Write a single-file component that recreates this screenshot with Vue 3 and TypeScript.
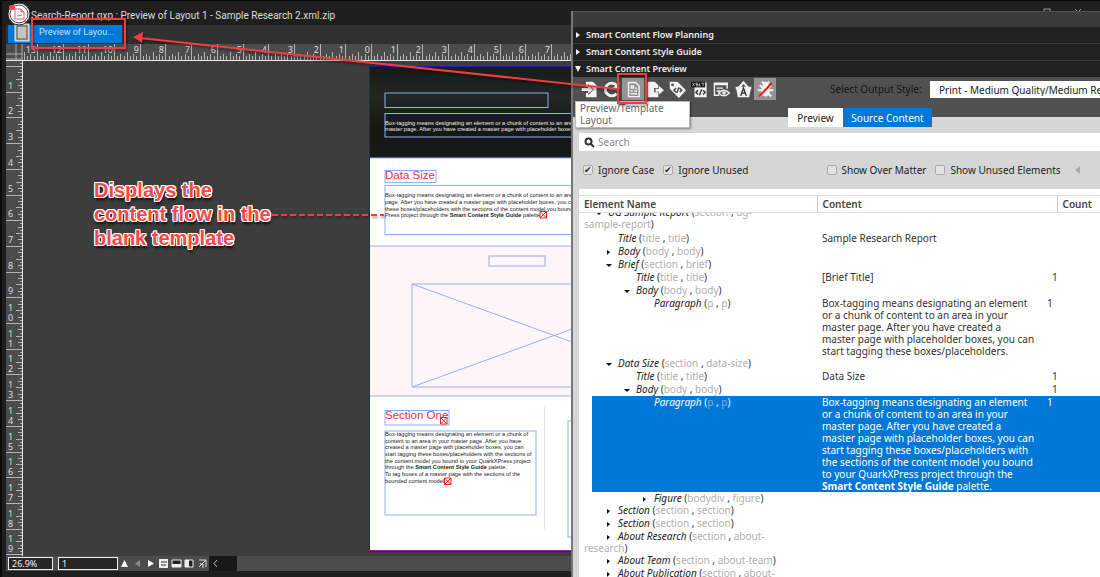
<script setup lang="ts">
import { ref } from 'vue'

interface TreeRow {
  level: number
  name: string
  tags: [string, string]
  tail?: string
  toggle?: 'open' | 'closed'
  content?: string
  strong?: string
  end?: string
  count?: string
  selected?: boolean
  size?: string
}

const PITCH = 25.7
const search = ref('')
const ignoreCase = ref(true)
const ignoreUnused = ref(true)
const overMatter = ref(false)
const unusedElements = ref(false)

// Horizontal ruler: zero sits at the left edge of the page.
const hOrigin = 365
const hTicks: { x: number; h: number }[] = []
for (let i = -14 * 8; i <= 8 * 8; i++) {
  const x = Math.round(hOrigin + (i * PITCH) / 8)
  if (x < 18) continue
  hTicks.push({ x, h: i % 8 === 0 ? 16 : i % 4 === 0 ? 8 : i % 2 === 0 ? 6 : 4 })
}
const hLabels = Array.from({ length: 21 }, (_, k) => k - 13).map((n) => ({
  text: String(Math.abs(n)),
  x: Math.round(hOrigin + n * PITCH) - 1,
}))

// Vertical ruler: zero sits at the top edge of the page.
const vOrigin = 5
const vTicks: { y: number; w: number }[] = []
for (let i = -1; i <= 19 * 8; i++) {
  const y = Math.round(vOrigin + (i * PITCH) / 8)
  vTicks.push({ y, w: i % 8 === 0 ? 17 : i % 4 === 0 ? 7 : i % 2 === 0 ? 5 : 3 })
}
const vLabels = Array.from({ length: 19 }, (_, k) => k + 1).flatMap((n) => {
  const y = Math.round(vOrigin + n * PITCH)
  const d = String(n)
  return d.length === 1
    ? [{ text: d, y: y - 3 }]
    : [{ text: d[0], y: y - 12 }, { text: d[1], y: y - 2 }]
})

const box =
  'Box-tagging means designating an element\nor a chunk of content to an area in your\nmaster page. After you have created a\nmaster page with placeholder boxes, you can\nstart tagging these boxes/placeholders'

const rows: TreeRow[] = [
  { level: 1, name: 'UG Sample Report', tags: ['section', 'ug-'], tail: 'sample-report', toggle: 'open', size: 'first' },
  { level: 2, name: 'Title', tags: ['title', 'title'], content: 'Sample Research Report' },
  { level: 2, name: 'Body', tags: ['body', 'body'], toggle: 'closed' },
  { level: 2, name: 'Brief', tags: ['section', 'brief'], toggle: 'open' },
  { level: 3, name: 'Title', tags: ['title', 'title'], content: '[Brief Title]', count: '1' },
  { level: 3, name: 'Body', tags: ['body', 'body'], toggle: 'open' },
  { level: 4, name: 'Paragraph', tags: ['p', 'p'], content: box + '.', count: '1', size: 'long' },
  { level: 2, name: 'Data Size', tags: ['section', 'data-size'], toggle: 'open' },
  { level: 3, name: 'Title', tags: ['title', 'title'], content: 'Data Size', count: '1' },
  { level: 3, name: 'Body', tags: ['body', 'body'], toggle: 'open', count: '1' },
  {
    level: 4,
    name: 'Paragraph',
    tags: ['p', 'p'],
    content: box + ' with\nthe sections of the content model you bound\nto your QuarkXPress project through the\n',
    strong: 'Smart Content Style Guide',
    end: ' palette.',
    count: '1',
    selected: true,
    size: 'long',
  },
  { level: 4, name: 'Figure', tags: ['bodydiv', 'figure'], toggle: 'closed', size: 'tight' },
  { level: 2, name: 'Section', tags: ['section', 'section'], toggle: 'closed' },
  { level: 2, name: 'Section', tags: ['section', 'section'], toggle: 'closed' },
  { level: 2, name: 'About Research', tags: ['section', 'about-'], tail: 'research', toggle: 'closed', size: 'tight' },
  { level: 2, name: 'About Team', tags: ['section', 'about-team'], toggle: 'closed' },
  { level: 2, name: 'About Publication', tags: ['section', 'about-'], tail: 'publication', toggle: 'closed' },
]

const sectionLines = [
  'Box-tagging means designating an element or a chunk of',
  'content to an area in your master page. After you have',
  'created a master page with placeholder boxes, you can',
  'start tagging these boxes/placeholders with the sections of',
  'the content model you bound to your QuarkXPress project',
]
</script>

<template>
  <div class="app">
    <header class="titlebar">
      <h1>Search-Report.qxp : Preview of Layout 1 - Sample Research 2.xml.zip</h1>
      <div class="win-controls">
        <svg width="8" height="8" viewBox="0 0 8 8"><rect x="1" y="1" width="6" height="6" /></svg>
        <svg width="8" height="8" viewBox="0 0 8 8"><path d="M1 1l6 6M7 1L1 7" /></svg>
      </div>
    </header>

    <nav class="tabbar">
      <button class="doc-tab" type="button">Preview of Layou...</button>
    </nav>

    <main class="workspace">
      <svg class="h-ruler" width="580" height="17">
        <path class="corner" d="M0 10H17M0 15H17M10 0V17M16 0V17" />
        <rect v-for="t in hTicks" :key="t.x" :x="t.x" :y="16 - t.h" width="1" :height="t.h" />
        <rect x="0" y="16" width="580" height="1" class="edge" />
        <text v-for="l in hLabels" :key="l.x" :x="l.x" y="9" text-anchor="end">{{ l.text }}</text>
      </svg>
      <div class="desk">
        <svg class="v-ruler" width="17" height="495">
          <rect v-for="t in vTicks" :key="t.y" :x="17 - t.w" :y="t.y" :width="t.w" height="1" />
          <rect x="16" y="0" width="1" height="495" class="edge" />
          <text v-for="l in vLabels" :key="l.y" x="2" :y="l.y">{{ l.text }}</text>
        </svg>
        <div class="canvas">
          <svg class="page" width="210" height="486" viewBox="0 0 420 972">
            <defs>
              <linearGradient id="banner" x1="0" y1="0" x2="0" y2="1">
                <stop offset="0" stop-color="#171b1a" />
                <stop offset=".35" stop-color="#222625" />
                <stop offset=".7" stop-color="#151716" />
                <stop offset="1" stop-color="#181a19" />
              </linearGradient>
            </defs>
            <rect width="420" height="972" fill="#fff" />
            <rect width="420" height="184" fill="url(#banner)" />
            <rect y="360" width="420" height="300" fill="#fff5f8" />
            <g class="frame">
              <path d="M0 184H420M0 360H420M0 660H420" />
              <rect x="32" y="54" width="326" height="29" />
              <rect x="32" y="95" width="420" height="47" />
              <rect x="32" y="209" width="102" height="24" />
              <rect x="32" y="239" width="420" height="98" />
              <rect x="240" y="380" width="112" height="20" />
              <path d="M420 436H86V642H420M86 436L420 557M86 642L420 521" />
              <rect x="32" y="689" width="128" height="29" />
              <rect x="32" y="730" width="302" height="168" />
              <rect x="398" y="710" width="60" height="232" />
            </g>
            <path d="M351 682V926" stroke="#e4e4e4" stroke-width="2" />
            <text class="heading" x="32" y="226">Data Size</text>
            <text class="heading" x="32" y="706">Section One</text>
            <svg class="copy" width="420" height="972" viewBox="0 0 630 1458">
              <g class="light">
                <text x="48" y="176">Box-tagging means designating an element or a chunk of content to an area</text>
                <text x="48" y="196">master page. After you have created a master page with placeholder boxes,</text>
              </g>
              <text x="48" y="394">Box-tagging means designating an element or a chunk of content to an area</text>
              <text x="48" y="414">page. After you have created a master page with placeholder boxes, you can</text>
              <text x="48" y="434">these boxes/placeholders with the sections of the content model you bound</text>
              <text x="48" y="454">Press project through the <tspan class="b">Smart Content Style Guide</tspan> palette</text>
              <text v-for="(line, i) in sectionLines" :key="i" x="48" :y="1110 + i * 20">{{ line }}</text>
              <text x="48" y="1210">through the <tspan class="b">Smart Content Style Guide</tspan> palette.</text>
              <text x="48" y="1231">To tag boxes of a master page with the sections of the</text>
              <text x="48" y="1252">bounded content model</text>
            </svg>
            <g class="overflow">
              <path d="M342 291h13v13h-13zl13 13m0-13l-13 13" />
              <path d="M143 703h13v13h-13zl13 13m0-13l-13 13" />
              <path d="M151 824h13v13h-13zl13 13m0-13l-13 13" />
            </g>
            <path d="M1 972V1H420" fill="none" stroke="#1c1cc0" stroke-width="2" />
            <path d="M0 969H420" stroke="#a010b8" stroke-width="2" />
            <path d="M0 971H420" stroke="#1c1cc0" stroke-width="2" />
          </svg>
        </div>
      </div>
      <footer class="status">
        <input class="zoom-field" aria-label="Zoom" value="26.9%" />
        <input class="page-field" aria-label="Page" value="1" />
        <button type="button" aria-label="Page list"><svg width="11" height="13"><path d="M2 10L5.500 3L9 10z" fill="#fff" /></svg></button>
        <button type="button" aria-label="Previous"><svg width="11" height="13"><path d="M8 3L3 6.500L8 10z" fill="#888" /></svg></button>
        <button type="button" aria-label="Next"><svg width="11" height="13"><path d="M3 3L9 6.500L3 10z" fill="#fff" /></svg></button>
        <button type="button" aria-label="Export"><svg width="11" height="13"><path d="M1 2h9v9H1z" fill="#eee" /><path d="M3 5h6M3 8h5" stroke="#333" stroke-width="1" /></svg></button>
        <button type="button" aria-label="Split horizontally"><svg width="11" height="13"><path d="M1 3h9v7H1z" fill="#222" stroke="#eee" /><path d="M1 7h9v3H1z" fill="#eee" /></svg></button>
        <button type="button" aria-label="Split vertically"><svg width="11" height="13"><path d="M1 3h8v7H1z" fill="#222" stroke="#eee" /><path d="M1 3h4v7H1z" fill="#eee" /></svg></button>
        <button type="button" aria-label="Preview"><svg width="11" height="13"><path d="M2 3h7v7M9 3L2 10M3 7h3v4" fill="none" stroke="#ddd" /></svg></button>
        <button class="scroll-left" type="button" aria-label="Scroll left"><svg width="8" height="9"><path d="M5 1L2 4.500L5 8" fill="none" stroke="#bbb" /></svg></button>
      </footer>
    </main>

    <section class="palette">
      <div class="grip"></div>
      <button class="fold" type="button"><svg width="6" height="8"><path d="M1 1L5 4L1 7z" /></svg>Smart Content Flow Planning</button>
      <button class="fold" type="button"><svg width="6" height="8"><path d="M1 1L5 4L1 7z" /></svg>Smart Content Style Guide</button>
      <button class="fold" type="button"><svg width="6" height="8"><path d="M0 1H6L3 7z" /></svg>Smart Content Preview</button>

      <div class="toolbar">
        <button type="button" aria-label="Import">
          <svg viewBox="0 0 24 24"><path class="f" d="M7 1h10l5 5v17H7v-6h3v3l8-8-8-8v4H7z" /><path class="f" d="M1 10h9V6l7 6-7 6v-4H1z" /></svg>
        </button>
        <button type="button" aria-label="Refresh">
          <svg viewBox="0 0 24 24"><path d="M19 18a9 9 0 1 1 0-12" class="s" stroke-width="4" /><path class="f" d="M23 1v10H13z" /></svg>
        </button>
        <button class="on" type="button" aria-label="Preview/Template Layout">
          <svg viewBox="0 0 24 24"><path d="M5 2h10l5 5v15H5z" class="s" stroke-width="2" /><path d="M9 7h3v3H9zM14 10h3M8 14h3M13 14h4M8 18h9" class="s" stroke-width="2" /></svg>
        </button>
        <button type="button" aria-label="Export">
          <svg viewBox="0 0 24 24"><path class="f" d="M1 1h10l5 5v4h-6v6h6v7H1z" /><path class="f" d="M12 11h5V7l7 6-7 6v-4h-5z" /></svg>
        </button>
        <button type="button" aria-label="Tags">
          <svg viewBox="0 0 24 24"><path class="f" fill-rule="evenodd" d="M1 1h11l12 12-10 11L1 11zM5 3.500a2 2 0 1 0 .1 0z" /><path d="M10 10l-3 3 3 3M15 10l3 3-3 3M14 9l-3 8" fill="none" stroke="#444" stroke-width="2" /></svg>
        </button>
        <button type="button" aria-label="XSLT">
          <svg viewBox="0 0 24 24"><path class="f" d="M5 2h17v21H5z" /><rect x="0" y="1" width="20" height="8" fill="#161616" /><path d="M2 3l3 4M5 3L2 7M10 3H7v2h3v2H7M12 3v4h2M15 3h4M17 3v4" fill="none" stroke="#ddd" /><path d="M10 13l-3 3 3 3M17 13l3 3-3 3M15 12l-3 8" fill="none" stroke="#333" stroke-width="2" /></svg>
        </button>
        <button type="button" aria-label="View report">
          <svg viewBox="0 0 24 24"><path d="M9 20H2V3h18v8M2 5h18M5 10h9M5 14h5" class="s" stroke-width="2" /><path d="M8 17q7-8 15 0q-8 8-15 0z" class="s" stroke-width="2" /><circle cx="15.500" cy="17" r="2.500" class="f" /></svg>
        </button>
        <button type="button" aria-label="Text basket">
          <svg viewBox="0 0 24 24"><path d="M6 9l6-7 6 7" class="s" stroke-width="3" /><path class="f" d="M1 8h22v4h-1l-2 11H4L2 12H1z" /><path d="M8 21l4-11 4 11M9 17h6" fill="none" stroke="#333" stroke-width="2" /></svg>
        </button>
        <button class="on" type="button" aria-label="Debug off">
          <svg viewBox="0 0 24 24"><ellipse cx="12" cy="14" rx="6" ry="8" class="f" /><circle cx="12" cy="5" r="4" class="f" /><path d="M1 13h22M4 6l5 4M20 6l-5 4M4 22l5-5M20 22l-5-5M7 1l3 3M17 1l-3 3" class="s" stroke-width="3" /><path d="M3 22L21 3" stroke="#f01818" stroke-width="3" /></svg>
        </button>
        <label for="style">Select Output Style:</label>
        <select id="style"><option>Print - Medium Quality/Medium Resolution</option></select>
      </div>

      <div class="tabs">
        <button type="button">Preview</button>
        <button type="button" class="active">Source Content</button>
      </div>

      <div class="search">
        <svg width="11" height="11" viewBox="0 0 11 11"><circle cx="4.500" cy="4.500" r="3" /><path d="M7 7l3 3" /></svg>
        <input v-model="search" type="text" aria-label="Search" placeholder="Search" />
      </div>

      <div class="filters">
        <label><input v-model="ignoreCase" type="checkbox" />Ignore Case</label>
        <label><input v-model="ignoreUnused" type="checkbox" />Ignore Unused</label>
        <label class="push"><input v-model="overMatter" type="checkbox" />Show Over Matter</label>
        <label><input v-model="unusedElements" type="checkbox" />Show Unused Elements</label>
        <svg width="6" height="9"><path d="M5 0L0 4L5 8z" fill="#aaa" /></svg>
      </div>

      <div class="sheet">
        <table class="head">
          <colgroup><col class="c1" /><col class="c2" /><col /></colgroup>
          <thead><tr><th>Element Name</th><th>Content</th><th>Count</th></tr></thead>
        </table>
        <div class="scroll">
          <table class="tree">
            <colgroup><col class="c1" /><col class="c2" /><col /></colgroup>
            <tbody>
              <tr v-for="(r, i) in rows" :key="i" :class="[r.size, { selected: r.selected }]">
                <td :class="'l' + r.level">
                  <span class="arrow"><svg v-if="r.toggle" width="6" height="6"><path :d="r.toggle === 'open' ? 'M0 2H6L3 5z' : 'M1 1L4 3L1 6z'" /></svg></span><i>{{ r.name }}</i> (<span class="tag">{{ r.tags[0] }}</span> , <span class="tag">{{ r.tags[1] }}</span><template v-if="r.tail"><br /><span class="tag">{{ r.tail }}</span></template>)
                </td>
                <td>{{ r.content }}<b v-if="r.strong">{{ r.strong }}</b>{{ r.end }}</td>
                <td>{{ r.count }}</td>
              </tr>
            </tbody>
          </table>
        </div>
      </div>

      <div class="tooltip" role="tooltip">Preview/Template<br />Layout</div>
    </section>

    <div class="badge">
      <svg width="26" height="42" viewBox="0 0 26 42">
        <rect x="9" y="23" width="14" height="17" fill="#b8b8b8" stroke="#eee" />
        <rect x="11" y="25" width="10" height="13" fill="#c4c4c4" stroke="#555" />
        <circle cx="13" cy="13" r="11" fill="#fff" stroke="#222" stroke-width="1" />
        <circle cx="13" cy="13" r="9" fill="none" stroke="#444" stroke-width="1" />
        <path d="M9 8h6l3 3v7H9zM15 8v3h3M11 15l5-1" fill="none" stroke="#f0506c" />
        <rect x="3" y="4" width="6" height="5" rx="2" fill="#f0405c" />
        <circle cx="19" cy="20" r="1" fill="#f0405c" />
      </svg>
    </div>

    <p class="note">Displays the<br />content flow in the<br />blank template</p>
    <svg class="marks" width="660" height="230">
      <g fill="none" stroke="#f03e3e" stroke-width="2">
        <rect x="32" y="19" width="93" height="29" />
        <rect x="618" y="74" width="28" height="29" />
        <path d="M617 89L140 38" />
        <path d="M272 215H384" stroke-dasharray="6 3" />
      </g>
      <path d="M133 37L143 32L142 43z" fill="#f03e3e" />
    </svg>
  </div>
</template>

<style>
html,
body,
#app {
  height: 100%;
}
body {
  margin: 0;
}
</style>

<style scoped>
.app {
  position: relative;
  display: flex;
  flex-direction: column;
  box-sizing: border-box;
  height: 100%;
  overflow: hidden;
  border-top: 1px solid #050505;
  border-left: 2px solid #0a0a0a;
  padding-left: 4px;
  background: #1f1f1f;
  color: #ddd;
  font: 10px/12px 'Noto Sans', sans-serif;
}
button,
input,
select {
  margin: 0;
  border: 0;
  padding: 0;
  background: none;
  color: inherit;
  font: inherit;
}
.titlebar {
  display: flex;
  flex: none;
  justify-content: space-between;
  height: 24px;
  padding: 0 18px 0 25px;
}
.titlebar h1 {
  margin: 0;
  padding-top: 3px;
  font: 400 10px/24px Roboto, sans-serif;
}
.win-controls {
  display: flex;
  gap: 23px;
  padding-top: 7px;
}
.win-controls svg {
  fill: none;
  stroke: #999;
}
.tabbar {
  flex: none;
  height: 19px;
  background: #303030;
}
.doc-tab {
  height: 18px;
  margin-left: 2px;
  padding: 0 8px 4px 31px;
  background: #0078d7;
  color: #c4e0f8;
  font: 9px/14px Roboto, sans-serif;
}
.workspace {
  display: flex;
  flex: 1;
  flex-direction: column;
  min-height: 0;
  padding-bottom: 6px;
}
.h-ruler,
.v-ruler {
  flex: none;
  display: block;
  background: #4c4c4c;
  fill: #b4b4b4;
}
.h-ruler text,
.v-ruler text {
  fill: #ddd;
  font: 9px 'Noto Sans', sans-serif;
}
.h-ruler .corner {
  stroke: #aaa;
}
.edge {
  fill: #e8e8e8;
}
.desk {
  display: flex;
  flex: 1;
  min-height: 0;
}
.canvas {
  position: relative;
  flex: 1;
  background: #3d3d3d;
}
.page {
  position: absolute;
  left: 346px;
  top: 5px;
}
.frame {
  fill: none;
  stroke: #8fb0ee;
  stroke-width: 2;
}
.copy {
  fill: #222;
  font: 17px 'Liberation Sans', Arial, sans-serif;
}
.copy .b {
  font-weight: 700;
}
.copy .light {
  fill: #eee;
}
.heading {
  fill: #f8285a;
  font: 23px 'Liberation Sans', Arial, sans-serif;
}
.overflow {
  fill: #fff;
  stroke: #f02020;
  stroke-width: 2;
}
.status {
  display: flex;
  flex: none;
  align-items: center;
  height: 15px;
  padding-left: 2px;
  background: #4c4c4c;
}
.status input {
  box-sizing: border-box;
  height: 13px;
  border: 1px solid #eee;
  padding: 0 3px;
  background: #262626;
  color: #eee;
  font-size: 9px;
}
.status .zoom-field {
  width: 45px;
  margin-right: 5px;
}
.status .page-field {
  width: 60px;
}
.status button {
  width: 13px;
  height: 13px;
}
.status button svg {
  display: block;
  margin: auto;
}
.status .scroll-left {
  width: 28px;
  height: 15px;
  padding-right: 14px;
  background: #181818;
}
.palette {
  position: absolute;
  top: 10px;
  right: 0;
  bottom: 0;
  left: 569px;
  display: flex;
  flex-direction: column;
  border-left: 2px solid #777;
  background: #d6d6d6;
}
.grip {
  flex: none;
  height: 14px;
  border-top: 1px solid #505050;
  background: #3b3b3b;
}
.fold {
  display: flex;
  flex: none;
  align-items: center;
  gap: 5px;
  height: 17px;
  border-top: 1px solid #3c3c3c;
  padding-left: 2px;
  background: #212121;
  color: #eee;
  font-size: 9px;
  font-weight: 600;
}
.fold svg {
  fill: #eee;
}
.toolbar {
  display: flex;
  flex: none;
  align-items: flex-start;
  height: 30px;
  padding: 1px 0 0 5px;
  background: #505050;
}
.toolbar button {
  width: 22px;
  height: 22px;
}
.toolbar button.on {
  background: #949494;
}
.toolbar svg {
  display: block;
  width: 17px;
  height: 17px;
  margin: auto;
}
.toolbar .f {
  fill: #f2f2f2;
}
.toolbar .s {
  fill: none;
  stroke: #f2f2f2;
}
.toolbar label {
  margin-left: 54px;
  width: 100px;
  color: #141414;
  line-height: 22px;
}
.toolbar select {
  flex: 1;
  min-width: 0;
  height: 17px;
  margin-top: 3px;
  padding-left: 9px;
  appearance: none;
  border-radius: 0;
  background: #fff;
  color: #222;
}
.tabs {
  display: flex;
  flex: none;
  height: 19px;
  padding-left: 215px;
  background: linear-gradient(#505050 9px, #d6d6d6 9px);
}
.tabs button {
  width: 55px;
  background: #fff;
  color: #222;
}
.tabs .active {
  width: 89px;
  background: #0078d7;
  color: #fff;
}
.search {
  display: flex;
  flex: none;
  align-items: center;
  gap: 3px;
  height: 18px;
  margin: 6px 0 0 6px;
  padding-left: 5px;
  background: #fff;
}
.search svg {
  fill: none;
  stroke: #333;
  stroke-width: 2;
}
.search input {
  flex: 1;
  outline: 0;
  color: #222;
}
.search input::placeholder {
  color: #888;
}
.filters {
  display: flex;
  flex: none;
  align-items: center;
  height: 38px;
  padding-left: 10px;
  color: #222;
}
.filters label {
  display: flex;
  align-items: center;
  gap: 5px;
  margin-right: 9px;
  white-space: nowrap;
}
.filters .push {
  margin-left: 69px;
}
.filters input {
  appearance: none;
  width: 10px;
  height: 10px;
  border: 1px solid #aaa;
  border-radius: 2px;
  background: #e4e4e4;
}
.filters input:checked::after {
  display: block;
  content: '✔';
  color: #222;
  font: 9px/8px 'DejaVu Sans', sans-serif;
}
.filters > svg {
  margin-left: 5px;
}
.sheet {
  display: flex;
  flex: 1;
  flex-direction: column;
  min-height: 0;
  margin-left: 6px;
  padding-top: 6px;
  background: #fff;
  color: #333;
}
table {
  width: 100%;
  table-layout: fixed;
  border-collapse: collapse;
}
.c1 {
  width: 238px;
}
.c2 {
  width: 240px;
}
.tree .c2 {
  width: 230px;
}
.head {
  border-top: 1px solid #ddd;
  border-bottom: 1px solid #ddd;
}
.head th {
  height: 16px;
  padding: 0 0 0 5px;
  text-align: left;
  font-weight: 600;
  color: #444;
}
.head th + th {
  border-left: 1px solid #ccc;
}
.scroll {
  flex: 1;
  min-height: 0;
  overflow: hidden;
}
.tree {
  margin-top: -7px;
}
.tree td {
  padding: 0 0 0 5px;
  vertical-align: top;
  line-height: 13px;
}
.tree .first td,
.tree .tight td,
.tree .long td {
  line-height: 12px;
}
.tree .first td {
  padding-bottom: 2px;
}
.tree .long td:last-child {
  padding-left: 0;
}
.tree td:nth-child(2) {
  white-space: pre;
}
.tree td:first-child {
  white-space: nowrap;
}
.tree td.l1 {
  text-indent: 12px;
}
.tree td.l2 {
  text-indent: 22px;
}
.tree td.l3 {
  text-indent: 40px;
}
.tree td.l4 {
  text-indent: 58px;
}
.tree i {
  color: #222;
}
.arrow {
  display: inline-block;
  width: 12px;
  text-indent: 0;
}
.arrow svg {
  display: block;
  fill: #111;
}
.tag {
  color: #b0b0b0;
}
.tree .selected td {
  background: #0078d7;
  color: #fff;
}
.tree .selected td:first-child {
  background: linear-gradient(to right, #fff 13px, #0078d7 13px);
}
.tree .selected i {
  color: #fff;
}
.tree .selected .tag {
  color: #8ab0d8;
}
.tooltip {
  position: absolute;
  top: 90px;
  left: 2px;
  box-sizing: border-box;
  width: 115px;
  border: 1px solid #bbb;
  padding: 0 4px 1px;
  background: #fff;
  color: #666;
  box-shadow: 1px 1px 2px #0006;
}
.badge {
  position: absolute;
  top: 0;
  left: 4px;
}
.note {
  position: absolute;
  top: 177px;
  left: 92px;
  margin: 0;
  color: #fa4848;
  font: 700 20px/24px 'Liberation Sans', Arial, sans-serif;
  text-shadow:
    1px 0 #fff,
    -1px 0 #fff,
    0 1px #fff,
    0 -1px #fff,
    1px 1px #fff,
    -1px 1px #fff,
    1px -1px #fff,
    -1px -1px #fff,
    1px 3px 3px #000;
}
.marks {
  position: absolute;
  top: -1px;
  left: -2px;
  pointer-events: none;
  filter: drop-shadow(1px 2px 1px #0006);
}
</style>
